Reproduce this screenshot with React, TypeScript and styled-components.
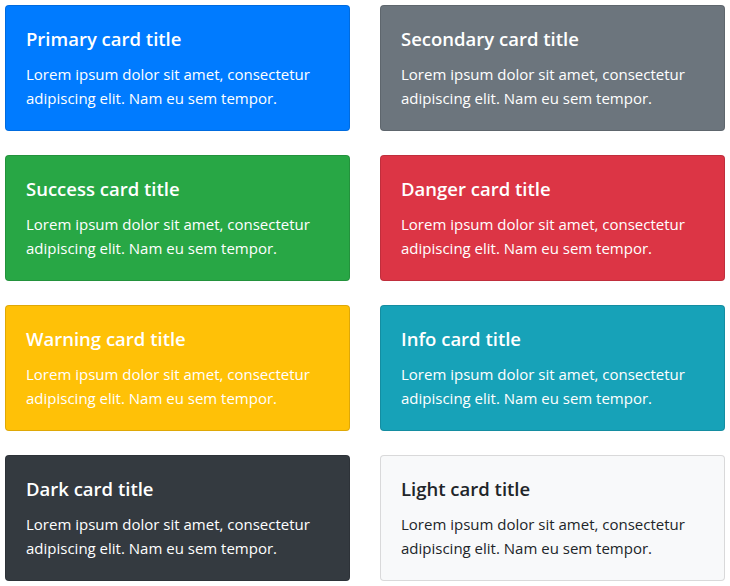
import React from 'react';
import styled, { createGlobalStyle } from 'styled-components';

const GlobalStyle = createGlobalStyle`
  body {
    margin: 0;
    background: #fff;
    font-family: "Segoe UI", "Open Sans", "Noto Sans", sans-serif;
  }
`;

const palette: Record<string, { bg: string; fg: string }> = {
  primary: { bg: '#007bff', fg: '#fff' },
  secondary: { bg: '#6c757d', fg: '#fff' },
  success: { bg: '#28a745', fg: '#fff' },
  danger: { bg: '#dc3545', fg: '#fff' },
  warning: { bg: '#ffc107', fg: '#fff' },
  info: { bg: '#17a2b8', fg: '#fff' },
  dark: { bg: '#343a40', fg: '#fff' },
  light: { bg: '#f8f9fa', fg: '#212529' },
};

const Grid = styled.div`
  display: grid;
  grid-template-columns: 345px 345px;
  column-gap: 30px;
  row-gap: 24px;
  padding: 5px;
`;

const Card = styled.div<{ $variant: string }>`
  box-sizing: border-box;
  height: 126px;
  padding: 20px 20px 18px;
  border: 1px solid rgba(0, 0, 0, 0.125);
  border-radius: 4px;
  background: ${(p) => palette[p.$variant].bg};
  color: ${(p) => palette[p.$variant].fg};
`;

const Title = styled.h5`
  margin: 0 0 12px;
  padding-top: 1px;
  font-size: 18.5px;
  font-weight: 600;
  line-height: 23px;
`;

const Text = styled.p`
  margin: 0;
  font-size: 15px;
  line-height: 24px;
`;

const cards = [
  ['primary', 'Primary'],
  ['secondary', 'Secondary'],
  ['success', 'Success'],
  ['danger', 'Danger'],
  ['warning', 'Warning'],
  ['info', 'Info'],
  ['dark', 'Dark'],
  ['light', 'Light'],
];

function App() {
  return (
    <>
      <GlobalStyle />
      <Grid>
        {cards.map(([key, name]) => (
          <Card key={key} $variant={key}>
            <Title>{name} card title</Title>
            <Text>
              Lorem ipsum dolor sit amet, consectetur adipiscing elit. Nam eu sem tempor.
            </Text>
          </Card>
        ))}
      </Grid>
    </>
  );
}

export default App;
